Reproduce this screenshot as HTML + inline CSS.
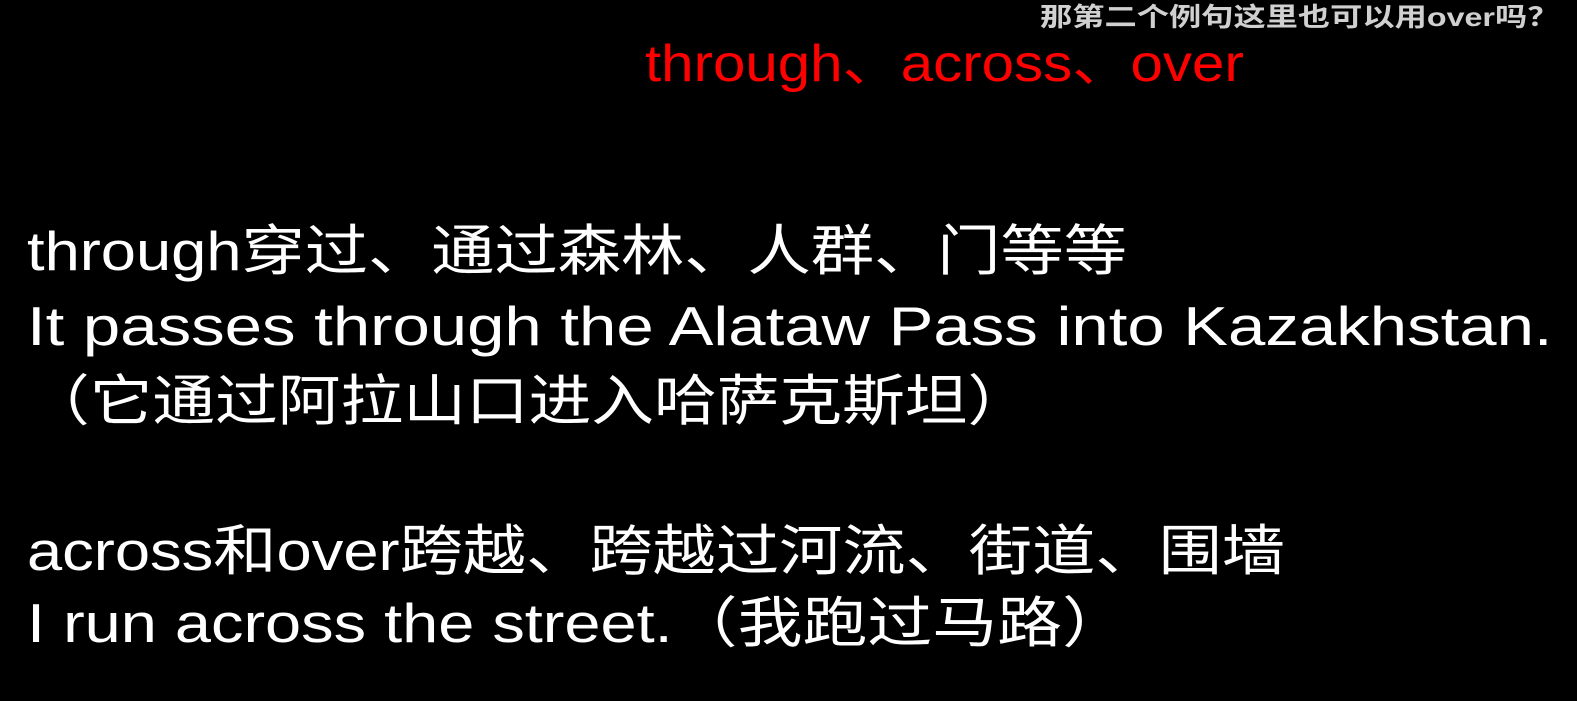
<!DOCTYPE html>
<html><head><meta charset="utf-8"><style>
html,body{margin:0;padding:0;background:#000;width:1577px;height:701px;overflow:hidden}
div{position:absolute;white-space:nowrap;font-family:"Liberation Sans","Noto Sans CJK SC",sans-serif;line-height:1;transform-origin:0 0}
.w{color:#fff;font-size:55px;left:27px}
</style></head><body>
<div style="left:1040px;top:4px;color:#d0d0d0;font-size:26px;font-weight:bold;transform:scaleX(1.24)">那第二个例句这里也可以用over吗？</div>
<div style="left:645px;top:38px;color:#f00;font-size:52px;transform:scaleX(1.12)">through、across、over</div>
<div class="w" style="top:224px;transform:scaleX(1.15)">through穿过、通过森林、人群、门等等</div>
<div class="w" style="top:299px;transform:scaleX(1.22)">It passes through the Alataw Pass into Kazakhstan.</div>
<div class="w" style="top:374px;transform:scaleX(1.14)">（它通过阿拉山口进入哈萨克斯坦）</div>
<div class="w" style="top:524px;transform:scaleX(1.15)">across和over跨越、跨越过河流、街道、围墙</div>
<div class="w" style="top:596px;transform:scaleX(1.18)">I run across the street.（我跑过马路）</div>
</body></html>
